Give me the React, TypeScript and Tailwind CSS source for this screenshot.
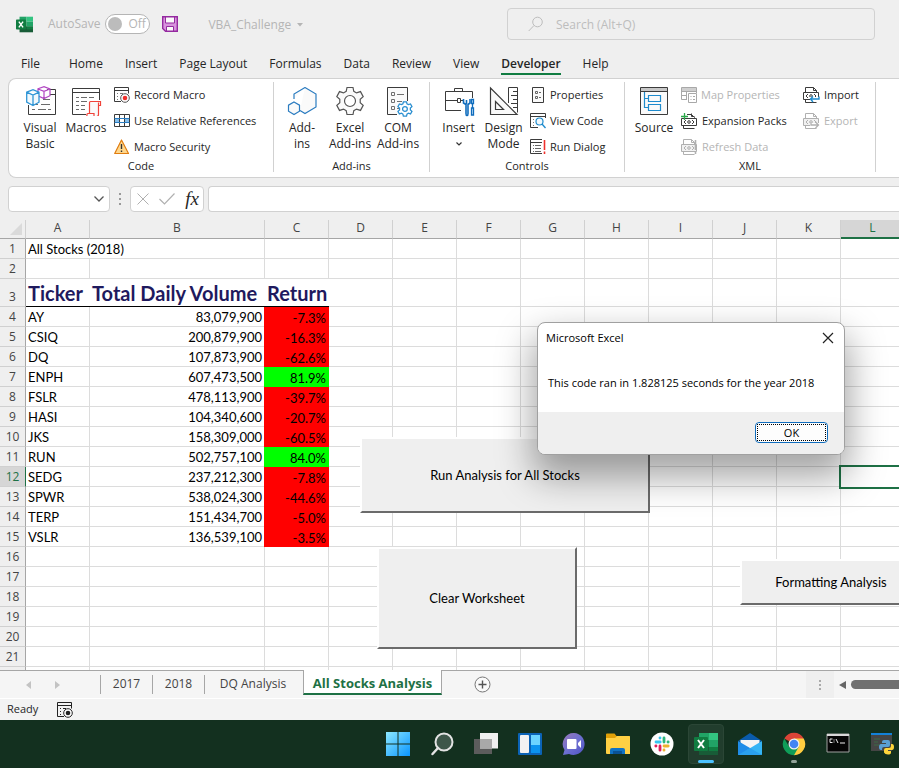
import React from "react";

type Node = React.ReactNode;

const ink = "#3b3b3b";

function Svg({ w, h, children, label }: { w: number; h: number; children: Node; label?: string }) {
  return (
    <svg width={w} height={h} viewBox={`0 0 ${w} ${h}`} fill="none" aria-hidden={!label} aria-label={label} className="shrink-0">
      {children}
    </svg>
  );
}

/* ---------- large ribbon icons (30 x 30) ---------- */

function VisualBasicIcon() {
  return (
    <Svg w={32} h={30}>
      <path d="M23 3.500h8.500v25H4.500V19" stroke={ink} />
      <path d="M26 8.500h5" stroke={ink} />
      <path d="M19 13.500h7M11 18.500h3M17 18.500h9M8 23.500h3M14 23.500h8M24 23.500h3" stroke="#6b6b6b" />
      <path d="M14 2.800 20 .7l6 2.300v6.700l-6 2.800-6-2.700zM14 3l6 2.300L26 3M20 5.300v7" fill="#fff" stroke="#b146c2" strokeWidth="1.200" />
      <path d="M2.700 6.200 9 3.700l6 2.500v10L9 19.500l-6.300-3.300zM2.700 6.200 9 9l6-2.800M9 9v10.500" fill="#f2f9fd" stroke="#2f95d6" strokeWidth="1.300" />
    </Svg>
  );
}

function MacrosIcon() {
  return (
    <Svg w={32} h={30}>
      <path d="M16 28.500H2.500v-26h27V14M2.500 6.500h27" stroke={ink} />
      <path d="M6 11.500h3M11 11.500h6M19 11.500h5M6 15.500h3M11 15.500h6M6 19.500h3M11 19.500h4M6 23.500h3M11 23.500h4" stroke="#6b6b6b" />
      <path d="M19.500 27.500v-11q0-1 1-1h10v4h-2v9q0 2-2 2h-9.500q-.500-3 1-3h6v2.500M28.500 19.500v-3" fill="#fafafa" stroke="#f0433a" strokeWidth="1.200" />
    </Svg>
  );
}

function AddInsIcon() {
  return (
    <Svg w={30} h={30}>
      <path d="m18 1.500 11 6.500v13l-11 6.500-5-3M7 13V8l11-6.500" fill="#fafafa" stroke="#2b7cc0" strokeWidth="1.200" />
      <path d="m7 16 5.500 3.200v6L7 28.500l-5.500-3.300v-6z" fill="#fafafa" stroke="#2b7cc0" strokeWidth="1.200" />
    </Svg>
  );
}

const gearPath =
  "M12 1.500h6l.8 3.800 2.700 1.600 4-1.300 2.700 5-3 2.700v3.400l3 2.700-2.700 5-4-1.300-2.700 1.600-.8 3.800h-6l-.8-3.800-2.700-1.600-4 1.300-2.700-5 3-2.700v-3.400l-3-2.700 2.700-5 4 1.300 2.700-1.600z";

function GearIcon() {
  return (
    <Svg w={30} h={30}>
      <path d={gearPath} fill="#fafafa" stroke="#555" strokeWidth="1.200" />
      <circle cx="15" cy="15" r="5.500" stroke="#555" strokeWidth="1.200" fill="#fff" />
    </Svg>
  );
}

function ComIcon() {
  return (
    <Svg w={30} h={31}>
      <path d="M14 28.500H4.500v-27h20V15" fill="#fafafa" stroke={ink} />
      <path d="M8.500 6.500h3v3h-3zM8.500 13.500h3v3h-3zM8.500 20.500h3v3h-3zM14 8.500h7M14 15.500h5M14 22.500h2" stroke="#707070" />
      <g transform="translate(14 15) scale(.53)">
        <path d={gearPath} fill="#fff" stroke="#2b8fd0" strokeWidth="2.400" />
        <circle cx="15" cy="15" r="4.500" stroke="#2b8fd0" strokeWidth="2.400" />
      </g>
    </Svg>
  );
}

function ToolboxIcon() {
  return (
    <Svg w={32} h={31}>
      <path d="M18 24.500H2.500v-19h27V12M11.500 5V2.500h8V5M2.500 14.500h12M18 14.500h2M14.500 12.500h3v4h-3z" stroke={ink} fill="none" />
      <path d="M20.500 13v4l2.500 1.500v9q0 2 1 2t1-2v-9l2-1.500v-4M23.500 14v4" stroke="#0f6cbd" strokeWidth="1.600" />
      <path d="M28.500 13.500h2v4h-2zM29.500 18v4M28.500 22h2v7h-2z" stroke="#0f6cbd" strokeWidth="1.300" fill="#cbe5f8" />
    </Svg>
  );
}

function DesignIcon() {
  return (
    <Svg w={30} h={30}>
      <path d="M1.500 2v26.500H28zM6.500 15.500v8h8z" stroke={ink} strokeWidth="1.200" fill="#fafafa" />
      <path d="M19.500 17V1.500h9v25M24 5.500h4M22 9.500h6M24 13.500h4M22 17.500h6M24 21.500h4" stroke={ink} />
    </Svg>
  );
}

function SourceIcon() {
  return (
    <Svg w={30} h={30}>
      <path d="M1.500 1.500h27v27h-27z" fill="#fafafa" stroke={ink} />
      <path d="M2 2h26v3H2z" fill="#c8c8c8" />
      <path d="M1.500 5.500h27" stroke={ink} />
      <path d="M5.500 6v15.500h4M5.500 12.500h4M9.500 9.500h12v6h-12zM9.500 18.500h12v6h-12z" stroke="#1e8bcd" strokeWidth="1.200" />
    </Svg>
  );
}

/* ---------- small ribbon icons (16 x 16) ---------- */

function RecordIcon({ dark }: { dark?: boolean }) {
  return (
    <Svg w={16} h={16}>
      <path d="M7 14.500H.5V.5h14v6M.5 3.500h14" stroke={dark ? "#222" : ink} />
      <path d="M3 6.500h1M6 6.500h3M3 9.500h1M3 12.500h1" stroke={dark ? "#222" : "#777"} />
      <circle cx="11" cy="11" r="4.300" stroke={dark ? "#222" : "#555"} fill="#fff" />
      <circle cx="11" cy="11" r="2.300" fill={dark ? "#222" : "#f0302c"} />
    </Svg>
  );
}

function RelativeIcon() {
  return (
    <Svg w={16} h={16}>
      <path d="M1 5h5v5H1zM11 5h4v5h-4z" fill="#83beec" />
      <path d="M.5 1.500h15v12H.5zM5.500 1.500v12M10.500 1.500v12" stroke={ink} />
      <path d="M.5 5.500h15M.5 9.500h15" stroke="#2b7cc0" />
    </Svg>
  );
}

function WarningIcon() {
  return (
    <Svg w={16} h={16}>
      <path d="M7.500 1 14.500 14.500H.7z" fill="#ffd78c" stroke="#e07d10" strokeWidth="1.200" strokeLinejoin="round" />
      <path d="M7.500 5v5M7.500 11.500V13" stroke="#333" strokeWidth="1.400" />
    </Svg>
  );
}

function PropertiesIcon() {
  return (
    <Svg w={16} h={16}>
      <path d="M2.500.5h11v15h-11z" fill="#fafafa" stroke={ink} />
      <path d="M5.500 4.500h2v2h-2zM5.500 9.500h2v2h-2zM9 5.500h2M9 10.500h2" stroke="#666" />
    </Svg>
  );
}

function ViewCodeIcon() {
  return (
    <Svg w={16} h={16}>
      <path d="M8 14.500H.5V.5h15V5M.5 3.500h15" stroke={ink} />
      <path d="M3 6.500h1M3 9.500h1M3 12.500h1" stroke="#777" />
      <circle cx="9.500" cy="8.500" r="3.500" fill="#f2f9fd" stroke="#1e8bcd" strokeWidth="1.200" />
      <path d="m12 11 3.500 4" stroke="#1e8bcd" strokeWidth="1.400" />
    </Svg>
  );
}

function RunDialogIcon() {
  return (
    <Svg w={16} h={16}>
      <path d="M12 14.500H.5V.5H12M.5 3.500H12" stroke={ink} />
      <path d="M3 6.500h1M5 6.500h6M3 9.500h1M5 9.500h6M3 12.500h1M5 12.500h6" stroke="#666" />
      <path d="M14.500 1v10M14.500 12.500V15" stroke="#f0302c" strokeWidth="1.600" />
    </Svg>
  );
}

function MapPropsIcon() {
  return (
    <Svg w={16} h={16}>
      <path d="M6 12.500H.5V.5h15V6M.5 4.500h15M.5 8.500H6M5.500 1v11M10.500 1v4" stroke="#a8a8a8" />
      <path d="M1 1h14v3H1z" fill="#cfcfcf" />
      <path d="M7.500 6.500h8v9h-8zM9.500 9.500h1M12 9.500h2M9.500 12.500h1M12 12.500h2" stroke="#a8a8a8" />
    </Svg>
  );
}

function XmlIcon({ kind }: { kind: "plus" | "refresh" | "import" | "export" }) {
  const off = kind === "refresh" || kind === "export";
  const c = off ? "#b0b0b0" : ink;
  return (
    <Svg w={17} h={16}>
      <path d={kind === "plus" ? "M6 1.500h4.500l3 3V6" : "M2.500 5.500v-5h8l3 3V5"} stroke={c} />
      <path d="M10.500.5v3h3M2.500 13v2.500h11" stroke={c} />
      <path d="M.5 5.500h15v7H.5z" fill={off ? "#f1f1f1" : "#fff"} stroke={c} />
      <path d="m5 7-2 2 2 2M11 7l2 2-2 2" stroke={c} />
      <circle cx="8" cy="9" r="1.300" stroke={c} />
      {kind === "plus" && <path d="M3.500 0v7M0 3.500h7" stroke="#2ba84a" strokeWidth="1.300" />}
      {kind === "refresh" && <path d="M14.500 1v10M14.500 12.500V15" stroke="#b0b0b0" strokeWidth="1.600" />}
      {kind === "import" && (
        <>
          <path d="M7 10h9v5H7z" fill="#fff" />
          <path d="M16 9.500v2.500H7.500M10 9.500 7.500 12l2.500 3" stroke="#1e8bcd" strokeWidth="1.400" />
        </>
      )}
      {kind === "export" && (
        <>
          <path d="M7 10h9v5H7z" fill="#fff" />
          <path d="M8 9.500v2.500h7M12.500 9 15.500 12l-3 3" stroke="#b0b0b0" strokeWidth="1.300" />
        </>
      )}
    </Svg>
  );
}

/* ---------- ribbon parts ---------- */

function BigButton({ icon, lines, width, menu }: { icon: Node; lines: string[]; width: string; menu?: boolean }) {
  return (
    <button className={`flex shrink-0 flex-col items-center pt-1 text-[12px] leading-4 ${width}`}>
      <span className="flex h-[34px] items-start">{icon}</span>
      {lines.map((l) => (
        <span key={l} className="whitespace-nowrap">{l}</span>
      ))}
      {menu && (
        <span className="flex h-4 items-center">
          <Svg w={8} h={6}>
            <path d="m1.500 1.500 2.500 2.500 2.500-2.500" stroke="#333" strokeWidth="1.200" />
          </Svg>
        </span>
      )}
    </button>
  );
}

function SmallButton({ icon, label, disabled }: { icon: Node; label: string; disabled?: boolean }) {
  return (
    <button disabled={disabled} className="flex h-[26px] items-center gap-1 text-[11px] leading-4 whitespace-nowrap disabled:text-[#b5b5b5]">
      {icon}
      {label}
    </button>
  );
}

function Group({ name, width, pad, children }: { name: string; width: string; pad: string; children: Node }) {
  return (
    <section aria-label={name} className={`mt-[3px] mb-[5px] flex shrink-0 flex-col border-r border-[#d1d1d1] ${width}`}>
      <div className={`flex h-20 ${pad}`}>{children}</div>
      <div className="h-3 text-center text-[11px] leading-3">{name}</div>
    </section>
  );
}

/* ---------- worksheet data ---------- */

const columns = ["A", "B", "C", "D", "E", "F", "G", "H", "I", "J", "K", "L"];

const stocks: [string, string, string][] = [
  ["AY", "83,079,900", "-7.3%"],
  ["CSIQ", "200,879,900", "-16.3%"],
  ["DQ", "107,873,900", "-62.6%"],
  ["ENPH", "607,473,500", "81.9%"],
  ["FSLR", "478,113,900", "-39.7%"],
  ["HASI", "104,340,600", "-20.7%"],
  ["JKS", "158,309,000", "-60.5%"],
  ["RUN", "502,757,100", "84.0%"],
  ["SEDG", "237,212,300", "-7.8%"],
  ["SPWR", "538,024,300", "-44.6%"],
  ["TERP", "151,434,700", "-5.0%"],
  ["VSLR", "136,539,100", "-3.5%"],
];

function Blank({ count }: { count: number }) {
  return (
    <>
      {Array.from({ length: count }, (_, i) => (
        <td key={i} className="border-r border-b border-[#dcdcdc]" />
      ))}
    </>
  );
}

function RowHead({ n }: { n: number }) {
  const active = n === 12;
  return (
    <th
      scope="row"
      className={`border-r border-b border-b-[#d0d0d0] text-center align-bottom font-['Open_Sans','Noto_Sans',sans-serif] text-[12px] leading-[19px] font-normal ${
        active ? "border-r-[#1e7145] bg-[#d6d6d6] text-[#1e7145]" : "border-r-[#a6a6a6] bg-[#efefef] text-[#444]"
      }`}
    >
      {n < 22 ? n : null}
    </th>
  );
}

function Sheet() {
  return (
    <table className="w-full min-w-[905px] table-fixed border-separate border-spacing-0">
      <colgroup>
        <col className="w-[26px]" />
        <col className="w-16" />
        <col className="w-[175px]" />
        {columns.slice(2, 11).map((c) => (
          <col key={c} className="w-16" />
        ))}
        <col />
      </colgroup>
      <thead>
        <tr className="h-[19px] bg-[#efefef]">
          <td className="border-r border-b border-r-[#d0d0d0] border-b-[#a6a6a6]">
            <span className="ml-auto block w-[15px] pr-1">
              <Svg w={12} h={12}>
                <path d="M12 0v12H0z" fill="#dadada" />
              </Svg>
            </span>
          </td>
          {columns.map((c) => (
            <th
              key={c}
              scope="col"
              className={`border-r border-r-[#d0d0d0] text-center align-top text-[12px] leading-4 font-normal ${
                c === "L" ? "border-b-2 border-b-[#1e7145] bg-[#d6d6d6] text-[#1e7145]" : "border-b border-b-[#a6a6a6] text-[#444]"
              }`}
            >
              {c}
            </th>
          ))}
        </tr>
      </thead>
      <tbody className="font-[Lato,Carlito,sans-serif] text-[13px] leading-[17px] text-black [&_td]:pt-0.5">
        <tr className="h-5">
          <RowHead n={1} />
          <td colSpan={2} className="border-r border-b border-[#dcdcdc] pl-0.5">All Stocks (2018)</td>
          <Blank count={10} />
        </tr>
        <tr className="h-5">
          <RowHead n={2} />
          <Blank count={12} />
        </tr>
        <tr className="h-7 text-[20px] leading-[25px] font-bold whitespace-nowrap text-[#1f1a5e]">
          <RowHead n={3} />
          <td className="border-b border-black pl-0.5">Ticker</td>
          <td className="border-b border-black pl-0.5">Total Daily Volume</td>
          <td className="border-b border-black pl-0.5">Return</td>
          <Blank count={9} />
        </tr>
        {stocks.map(([ticker, volume, ret], i) => (
          <tr key={ticker} className="h-5">
            <RowHead n={i + 4} />
            <td className="border-r border-b border-[#dcdcdc] pl-0.5">{ticker}</td>
            <td className="border-b border-[#dcdcdc] pr-[3px] text-right">{volume}</td>
            <td
              className={`pr-[3px] text-right ${
                ret.startsWith("-") ? "bg-[#ff0000] shadow-[-1px_0_0_#ff0000]" : "bg-[#00ff00] shadow-[-1px_0_0_#00ff00]"
              }`}
            >
              {ret}
            </td>
            {i === 8 ? (
              <>
                <Blank count={8} />
                <td className="outline-2 outline-[#1e7145]" />
              </>
            ) : (
              <Blank count={9} />
            )}
          </tr>
        ))}
        {[16, 17, 18, 19, 20, 21, 22].map((n) => (
          <tr key={n} className="h-5">
            <RowHead n={n} />
            <Blank count={12} />
          </tr>
        ))}
      </tbody>
    </table>
  );
}

const formButton =
  "absolute border-t-2 border-l-2 border-t-white border-l-white border-r-2 border-b-2 border-r-[#6b6b6b] border-b-[#6b6b6b] bg-[#efefef] font-[Lato,Carlito,sans-serif] text-[13px] leading-5 text-black whitespace-nowrap";

function Dialog() {
  return (
    <div
      role="dialog"
      aria-label="Microsoft Excel"
      className="absolute top-[102px] left-[537px] flex h-[133px] w-[308px] flex-col overflow-hidden rounded-lg border border-[#a0a0a0] bg-white text-[11px] text-black shadow-[0_18px_36px_4px_rgba(0,0,0,0.36)]"
    >
      <div className="flex h-[30px] items-center justify-between pr-[9px] pl-2">
        <span>Microsoft Excel</span>
        <button aria-label="Close" className="p-px">
          <Svg w={12} h={12}>
            <path d="m1 1 10 10M11 1 1 11" stroke="#222" strokeWidth="1.200" />
          </Svg>
        </button>
      </div>
      <p className="flex flex-1 items-center pt-0.5 pl-2.5 whitespace-nowrap">This code ran in 1.828125 seconds for the year 2018</p>
      <div className="flex h-[42px] items-center justify-end bg-[#efefef] pr-4 pb-0.5">
        <button className="h-[21px] w-[73px] rounded border border-[#0f6cbd] bg-[#fdfdfd] p-px leading-none">
          <span className="flex h-full items-center justify-center border border-dotted border-black">OK</span>
        </button>
      </div>
    </div>
  );
}

/* ---------- taskbar ---------- */

function ExcelLogo({ size }: { size: number }) {
  return (
    <svg width={size} height={size} viewBox="0 0 24 24" aria-label="Excel">
      <path d="M5 1h10v7H5z" fill="#21a366" />
      <path d="M15 1h9v7h-9z" fill="#33c481" />
      <path d="M5 8h10v8H5z" fill="#107c41" />
      <path d="M15 8h9v7h-9z" fill="#21a366" />
      <path d="M5 15h19v8H5z" fill="#185c37" />
      <path d="M15 15h9v4h-9z" fill="#107c41" />
      <rect y="5" width="14" height="14" rx="1" fill="#107c41" />
      <path d="m4 8 6 8M10 8l-6 8" stroke="#fff" strokeWidth="2" />
    </svg>
  );
}

const taskIcons: { name: string; art: Node }[] = [
  {
    name: "Start",
    art: (
      <Svg w={24} h={24}>
        <defs>
          <linearGradient id="win" x1="0" y1="0" x2="1" y2="1">
            <stop stopColor="#8ce8ff" />
            <stop offset="1" stopColor="#0a95ff" />
          </linearGradient>
        </defs>
        <path d="M0 0h11.500v11.500H0zM12.500 0H24v11.500H12.500zM0 12.500h11.500V24H0zM12.500 12.500H24V24H12.500z" fill="url(#win)" />
      </Svg>
    ),
  },
  {
    name: "Search",
    art: (
      <Svg w={24} h={24}>
        <circle cx="14" cy="10" r="8.500" fill="#3d5649" stroke="#e3e3e3" strokeWidth="2" />
        <path d="m8 16-5.500 6" stroke="#e3e3e3" strokeWidth="2.500" strokeLinecap="round" />
      </Svg>
    ),
  },
  {
    name: "Task view",
    art: (
      <Svg w={24} h={24}>
        <path d="M0 7h18v15H0z" fill="#5c5c5c" />
        <path d="M6 1h18v15.500H6z" fill="#f0f0f0" />
        <path d="M6 7h12v9.500H6z" fill="#a9a9a9" />
      </Svg>
    ),
  },
  {
    name: "Widgets",
    art: (
      <Svg w={24} h={24}>
        <rect y="1" width="24" height="22" rx="1" fill="#0b63b6" />
        <rect x="2" y="3" width="9" height="18" rx="1" fill="#f2f2f2" />
        <rect x="13" y="3" width="9" height="10" fill="#6cd4ff" />
        <rect x="13" y="13" width="9" height="8" fill="#0b93ee" />
      </Svg>
    ),
  },
  {
    name: "Chat",
    art: (
      <Svg w={24} h={24}>
        <defs>
          <linearGradient id="chat" x1="0" y1="0" x2="1" y2="1">
            <stop stopColor="#9a78b8" />
            <stop offset=".5" stopColor="#6d6fd0" />
            <stop offset="1" stopColor="#4f52c4" />
          </linearGradient>
        </defs>
        <path d="M12 1a11 11 0 1 1-5 21l-6 1 1.500-5A11 11 0 0 1 12 1z" fill="url(#chat)" />
        <rect x="5" y="7" width="9.500" height="10" rx="1" fill="#fff" />
        <path d="m16 11 3-3v8l-3-3z" fill="#fff" />
      </Svg>
    ),
  },
  {
    name: "File Explorer",
    art: (
      <Svg w={24} h={24}>
        <path d="M0 2.500Q0 1.500 1 1.500h7.500L10.500 4H23q1 0 1 1v8H0z" fill="#e0a008" />
        <path d="M0 6h9l2-2h12q1 0 1 1v17H1q-1 0-1-1z" fill="#ffd044" />
        <path d="M4 22v-4q0-2 2-2h11q2 0 2 2v4z" fill="#1072c4" />
        <path d="M7 19h9v3H7z" fill="#0a5296" />
      </Svg>
    ),
  },
  {
    name: "Slack",
    art: (
      <Svg w={24} h={24}>
        <circle cx="12" cy="12" r="11.500" fill="#fff" />
        <g strokeWidth="2.800" strokeLinecap="round">
          <path d="M10 5.800V6M6 10h4.200" stroke="#36c5f0" />
          <path d="M14 10V6M18 10h.2" stroke="#2eb67d" />
          <path d="M14 14h4.200M14 18v.2" stroke="#ecb22e" />
          <path d="M10 14v4.200M6 14h-.2" stroke="#e01e5a" />
        </g>
      </Svg>
    ),
  },
  { name: "Excel", art: <ExcelLogo size={24} /> },
  {
    name: "Mail",
    art: (
      <Svg w={24} h={24}>
        <path d="M0 9 12 1l12 8-12 6z" fill="#0a5bab" />
        <path d="M2.500 8h19v6L12 18l-9.500-6z" fill="#f4f4f4" />
        <path d="m0 9 24 14H0z" fill="#1f8ce8" />
        <path d="M24 9 9 18l15 5z" fill="#35b4f5" />
        <path d="M0 23 12 16l12 7z" fill="#2aa0ee" />
      </Svg>
    ),
  },
  {
    name: "Chrome",
    art: (
      <Svg w={24} h={24}>
        <path d="M12 12 2.300 6.400A11.200 11.200 0 0 1 21.700 6.400z" fill="#db4437" />
        <path d="M12 12V6.400h9.700A11.200 11.200 0 0 1 12 23.200z" fill="#ffcd40" />
        <path d="m12 12 4.800 2.800L12 23.200A11.200 11.200 0 0 1 2.300 6.400L7.200 14.800z" fill="#0f9d58" />
        <circle cx="12" cy="12" r="5.500" fill="#f1f1f1" />
        <circle cx="12" cy="12" r="4.300" fill="#4285f4" />
      </Svg>
    ),
  },
  {
    name: "Command Prompt",
    art: (
      <Svg w={24} h={24}>
        <path d="M1 2h22v18H1z" fill="#050505" stroke="#a0a0a0" />
        <path d="M1 2h22v2H1z" fill="#d8d8d8" />
        <path d="M6.500 7H4v3.500h2.500M8 7.500v1M8 9.500v1M10 7l2 4M14 11h5" stroke="#eee" />
      </Svg>
    ),
  },
  {
    name: "Python",
    art: (
      <Svg w={24} h={24}>
        <path d="M1 1h21v18H1z" fill="#454545" />
        <path d="M1 1h21v2H1z" fill="#1381d8" />
        <path d="M4 7h6M4 10h4M4 13h5" stroke="#3d6b46" />
        <path d="M14 8h4q2 0 2 2v3q0 2-2 2h-4q-2 0-2 2v1h-1q-2 0-2-3t2-3h5v-1h-4v-1q0-2 2-2z" fill="#5a9fd4" />
        <path d="M21 12h1q2 0 2 3t-2 3h-4v1h3v1.500q0 2-3 2t-4-2V18q0-2 2-2h3q2 0 2-2z" fill="#ffd43b" />
      </Svg>
    ),
  },
];

const tabs = ["File", "Home", "Insert", "Page Layout", "Formulas", "Data", "Review", "View", "Developer", "Help"];

export default function App() {
  return (
    <div className="flex h-screen min-h-[600px] flex-col overflow-hidden bg-[#efefef] font-['Open_Sans','Noto_Sans',sans-serif] text-[12px] text-[#262626]">
      <header className="flex h-12 shrink-0 items-center pr-6 pl-4 text-[#b5b5b5]">
        <ExcelLogo size={17} />
        <label htmlFor="autosave" className="ml-[15px] text-[12px]">AutoSave</label>
        <button
          id="autosave"
          role="switch"
          aria-checked="false"
          className="ml-[5px] flex h-5 w-[45px] items-center gap-1.5 rounded-full border border-[#b5b5b5] bg-white pl-0.5 text-[12px]"
        >
          <span className="size-3.5 rounded-full bg-[#bcbcbc]" />
          Off
        </button>
        <button aria-label="Save" className="ml-3">
          <Svg w={16} h={16}>
            <path d="M.7.7h14.600v14.600H3.500L.7 12.500z" fill="#d893dd" stroke="#952aa0" strokeWidth="1.400" />
            <path d="M3.500 1h9v6h-9zM4.500 10.500h7V15h-7z" fill="#fafafa" stroke="#952aa0" />
          </Svg>
        </button>
        <button className="ml-[30px] flex items-center gap-1.5 pt-0.5 text-[12px]">
          VBA_Challenge
          <Svg w={6} h={4}>
            <path d="M0 0h6L3 3.500z" fill="#b5b5b5" />
          </Svg>
        </button>
        <div className="ml-auto flex h-8 w-[368px] items-center gap-3 rounded border border-[#d1d1d1] pl-5">
          <Svg w={16} h={16}>
            <circle cx="9.500" cy="6" r="4.800" stroke="#bdbdbd" />
            <path d="M6 9.500.7 15" stroke="#bdbdbd" />
          </Svg>
          <input aria-label="Search" placeholder="Search (Alt+Q)" className="w-full bg-transparent pt-0.5 text-[12px] outline-none placeholder:text-[#bdbdbd]" />
        </div>
      </header>

      <nav className="flex h-[30px] shrink-0 items-start gap-[22px] pt-1.5 pl-[21px] leading-[19px]">
        {tabs.map((t) => (
          <button
            key={t}
            className={
              t === "Developer"
                ? "border-b-2 border-[#107c41] text-[12px] font-semibold"
                : t === "File"
                  ? "min-w-[26px] text-left text-[12px]"
                  : "text-[12px] whitespace-nowrap"
            }
          >
            {t}
          </button>
        ))}
      </nav>

      <div className="ml-2 flex h-[100px] shrink-0 overflow-hidden rounded-l-lg border-y border-l border-[#d1d1d1] bg-white">
        <Group name="Code" width="w-[265px]" pad="pl-2">
          <BigButton icon={<VisualBasicIcon />} lines={["Visual", "Basic"]} width="w-[46px]" />
          <BigButton icon={<MacrosIcon />} lines={["Macros"]} width="w-[46px]" />
          <div className="ml-[5px]">
            <SmallButton icon={<RecordIcon />} label="Record Macro" />
            <SmallButton icon={<RelativeIcon />} label="Use Relative References" />
            <SmallButton icon={<WarningIcon />} label="Macro Security" />
          </div>
        </Group>
        <Group name="Add-ins" width="w-[156px]" pad="pl-1">
          <BigButton icon={<AddInsIcon />} lines={["Add-", "ins"]} width="w-12" />
          <BigButton icon={<GearIcon />} lines={["Excel", "Add-ins"]} width="w-12" />
          <BigButton icon={<ComIcon />} lines={["COM", "Add-ins"]} width="w-12" />
        </Group>
        <Group name="Controls" width="w-[195px]" pad="pl-1.5">
          <BigButton icon={<ToolboxIcon />} lines={["Insert"]} width="w-[45px]" menu />
          <BigButton icon={<DesignIcon />} lines={["Design", "Mode"]} width="w-[45px]" />
          <div className="ml-1">
            <SmallButton icon={<PropertiesIcon />} label="Properties" />
            <SmallButton icon={<ViewCodeIcon />} label="View Code" />
            <SmallButton icon={<RunDialogIcon />} label="Run Dialog" />
          </div>
        </Group>
        <Group name="XML" width="w-[251px]" pad="pl-[5px]">
          <BigButton icon={<SourceIcon />} lines={["Source"]} width="w-12" />
          <div className="ml-[3px] w-[122px] shrink-0">
            <SmallButton icon={<MapPropsIcon />} label="Map Properties" disabled />
            <SmallButton icon={<XmlIcon kind="plus" />} label="Expansion Packs" />
            <SmallButton icon={<XmlIcon kind="refresh" />} label="Refresh Data" disabled />
          </div>
          <div>
            <SmallButton icon={<XmlIcon kind="import" />} label="Import" />
            <SmallButton icon={<XmlIcon kind="export" />} label="Export" disabled />
          </div>
        </Group>
      </div>

      <div className="flex h-[42px] shrink-0 items-center pl-2">
        <div className="flex h-[26px] w-[102px] items-center rounded border border-[#d1d1d1] bg-white pr-1">
          <input aria-label="Name box" className="w-full min-w-0 bg-transparent pl-2 outline-none" />
          <button aria-label="Open name list">
            <Svg w={12} h={8}>
              <path d="m1.500 1.500 4.500 4.500 4.500-4.500" stroke="#555" strokeWidth="1.300" />
            </Svg>
          </button>
        </div>
        <span className="mx-[9px] flex flex-col gap-[3px]">
          <i className="size-0.5 bg-[#999]" />
          <i className="size-0.5 bg-[#999]" />
          <i className="size-0.5 bg-[#999]" />
        </span>
        <div className="flex h-[26px] w-[74px] items-center justify-between rounded border border-[#d1d1d1] bg-white px-1">
          <button aria-label="Cancel" className="pl-0.5">
            <Svg w={12} h={12}>
              <path d="m.5.5 11 11M11.500.5l-11 11" stroke="#b0b0b0" />
            </Svg>
          </button>
          <button aria-label="Enter">
            <Svg w={16} h={12}>
              <path d="m.5 6 5 5L15.500.5" stroke="#b0b0b0" strokeWidth="1.200" />
            </Svg>
          </button>
          <button aria-label="Insert function" className="font-['Liberation_Serif',serif] text-[19px] leading-5 italic">fx</button>
        </div>
        <input aria-label="Formula" className="ml-1 h-[26px] flex-1 rounded-l border-y border-l border-[#d1d1d1] bg-white px-2 outline-none" />
      </div>

      <main className="relative min-h-0 flex-1 overflow-hidden bg-white">
        <Sheet />
        <button className={`${formButton} top-[217px] left-[360px] h-[76px] w-[290px]`}>Run Analysis for All Stocks</button>
        <button className={`${formButton} top-[327px] left-[377px] h-[102px] w-[200px]`}>Clear Worksheet</button>
        <button className={`${formButton} top-[339px] left-[740px] h-[46px] w-[182px]`}>Formatting Analysis</button>
        <Dialog />
      </main>

      <div className="flex h-7 shrink-0 border-t border-[#a6a6a6] bg-[#f5f5f5] text-[12px] text-[#444]">
        <div className="flex w-[100px] items-center gap-6 pl-[26px]">
          <button aria-label="Previous sheet">
            <Svg w={5} h={8}>
              <path d="M5 0v8L0 4z" fill="#c3c3c3" />
            </Svg>
          </button>
          <button aria-label="Next sheet">
            <Svg w={5} h={8}>
              <path d="M0 0v8l5-4z" fill="#c3c3c3" />
            </Svg>
          </button>
        </div>
        <button className="my-1 w-[52px] border-l border-[#a6a6a6] pb-0.5">2017</button>
        <button className="my-1 w-[52px] border-l border-[#a6a6a6] pb-0.5">2018</button>
        <button className="my-1 w-[99px] border-l border-[#a6a6a6] pr-0.5 pb-0.5">DQ Analysis</button>
        <button className="-mt-px mb-[3px] w-[139px] border-x border-b-2 border-x-[#a6a6a6] border-b-[#1e7145] bg-white pt-0.5 text-[13px] leading-4 font-bold whitespace-nowrap text-[#1e7145]">
          All Stocks Analysis
        </button>
        <button aria-label="New sheet" className="ml-8">
          <Svg w={17} h={17}>
            <circle cx="8.500" cy="8.500" r="7.500" stroke="#777" fill="#fafafa" />
            <path d="M8.500 4.500v8M4.500 8.500h8" stroke="#555" strokeWidth="1.400" />
          </Svg>
        </button>
        <div className="ml-auto flex w-[93px] items-center">
          <span className="flex h-full w-7 flex-col items-center justify-center gap-0.5 bg-[#efefef]">
            <i className="size-0.5 bg-[#aaa]" />
            <i className="size-0.5 bg-[#aaa]" />
            <i className="size-0.5 bg-[#aaa]" />
          </span>
          <button aria-label="Scroll left" className="ml-[5px]">
            <Svg w={7} h={8}>
              <path d="M7 0v8L0 4z" fill="#666" />
            </Svg>
          </button>
          <span className="ml-[5px] h-[9px] flex-1 rounded-l-full bg-[#707070]" />
        </div>
      </div>

      <div className="flex h-[22px] shrink-0 items-center gap-[19px] border-t border-white bg-[#f3f3f3] pl-[7px] text-[11px]">
        Ready
        <RecordIcon dark />
      </div>

      <footer className="flex h-12 shrink-0 items-center overflow-hidden bg-[#13301f] pl-[376px]">
        {taskIcons.map(({ name, art }) => (
          <button
            key={name}
            aria-label={name}
            className={
              name === "Excel"
                ? "mx-1 flex h-10 w-9 shrink-0 flex-col items-center justify-end rounded border border-[#2b4636] bg-[#213d2d]"
                : "flex h-10 w-11 shrink-0 flex-col items-center justify-end pb-px"
            }
          >
            {art}
            <span
              className={
                name === "Excel"
                  ? "mt-1 h-[3px] w-4 rounded-full bg-[#4cc2ff]"
                  : name === "Chrome"
                    ? "mt-1 h-[3px] w-1.5 rounded-full bg-[#93a39a]"
                    : "mt-1 h-[3px] w-1"
              }
            />
          </button>
        ))}
      </footer>
    </div>
  );
}
